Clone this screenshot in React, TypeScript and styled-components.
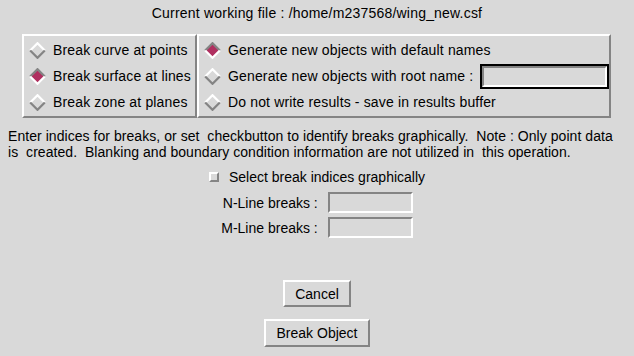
import React from 'react';
import styled, { createGlobalStyle } from 'styled-components';

const GlobalStyle = createGlobalStyle`
  html, body {
    margin: 0;
    padding: 0;
    background: #d9d9d9;
  }
  body {
    font-family: "Liberation Sans", Arial, sans-serif;
    color: #000;
  }
`;

const LIGHT = '#ffffff';
const DARK = '#848484';
const SELECT = '#b03060';

const Window = styled.div`
  width: 634px;
  height: 356px;
  display: flex;
  flex-direction: column;
  align-items: center;
  background: #d9d9d9;
  overflow: hidden;
`;

const Title = styled.div`
  height: 26px;
  line-height: 27px;
  font-size: 14px;
  letter-spacing: 0.2px;
  white-space: pre;
`;

const Frame = styled.div`
  margin-top: 8px;
  align-self: flex-start;
  margin-left: 22px;
  display: flex;
`;

const Panel = styled.div<{ $width: number }>`
  width: ${(p) => p.$width}px;
  box-sizing: border-box;
  padding: 1px 0;
  border: 2px solid;
  border-color: ${LIGHT} ${DARK} ${DARK} ${LIGHT};
  display: flex;
  flex-direction: column;
`;

const RadioRow = styled.div`
  height: 26px;
  display: flex;
  align-items: center;
  padding-left: 5px;
  gap: 7px;
  font-size: 14px;
  letter-spacing: 0.15px;
  white-space: pre;
`;

const RadioLabel = styled.span`
  flex: none;
`;

const FocusEntry = styled.div`
  margin-left: auto;
  width: 129px;
  height: 25px;
  box-sizing: border-box;
  border: 2px solid #000;
  background: #d9d9d9;
  &::after {
    content: '';
    display: block;
    height: 100%;
    box-sizing: border-box;
    border: 2px solid;
    border-color: ${DARK} ${LIGHT} ${LIGHT} ${DARK};
  }
`;

const Note = styled.div`
  align-self: flex-start;
  margin: 10px 0 0 8px;
  font-size: 14px;
  line-height: 16px;
  letter-spacing: 0.05px;
  white-space: pre;
`;

const CheckRow = styled.div`
  margin-top: 9px;
  height: 16px;
  display: flex;
  align-items: center;
  gap: 10px;
  font-size: 14px;
  white-space: pre;
`;

const CheckBox = styled.span`
  width: 10px;
  height: 10px;
  box-sizing: border-box;
  border: 2px solid;
  border-color: ${LIGHT} ${DARK} ${DARK} ${LIGHT};
  background: #d9d9d9;
`;

const FieldGrid = styled.div`
  margin-top: 7px;
  display: grid;
  grid-template-columns: auto 85px;
  column-gap: 10px;
  row-gap: 4px;
  align-items: center;
  font-size: 14px;
`;

const FieldLabel = styled.span`
  text-align: right;
  white-space: pre;
`;

const Entry = styled.div`
  width: 85px;
  height: 21px;
  box-sizing: border-box;
  border: 2px solid;
  border-color: ${DARK} ${LIGHT} ${LIGHT} ${DARK};
`;

const Button = styled.button<{ $first?: boolean }>`
  margin-top: ${(p) => (p.$first ? '42px' : '12px')};
  height: ${(p) => (p.$first ? '27px' : '28px')};
  width: ${(p) => (p.$first ? '68px' : '106px')};
  padding: 0;
  font-family: inherit;
  font-size: 14px;
  background: #d9d9d9;
  color: #000;
  border: 2px solid;
  border-color: ${LIGHT} ${DARK} ${DARK} ${LIGHT};
  border-radius: 0;
`;

const Diamond = ({ on }: { on?: boolean }) => (
  <svg width="17" height="17" viewBox="0 0 17 17" style={{ flex: 'none' }}>
    <polygon points="8.5,1 16,8.5 8.5,16 1,8.5" fill={on ? SELECT : '#d9d9d9'} />
    <polyline points="1.2,8.5 8.5,1.2 15.8,8.5" fill="none" stroke={on ? DARK : LIGHT} strokeWidth="2.2" />
    <polyline points="1.2,8.5 8.5,15.8 15.8,8.5" fill="none" stroke={on ? LIGHT : DARK} strokeWidth="2.2" />
  </svg>
);

const breakModes = [
  { label: 'Break curve at points', on: false },
  { label: 'Break surface at lines', on: true },
  { label: 'Break zone at planes', on: false },
];

export default function App() {
  return (
    <Window>
      <GlobalStyle />
      <Title>Current working file : /home/m237568/wing_new.csf</Title>

      <Frame>
        <Panel $width={175}>
          {breakModes.map((m) => (
            <RadioRow key={m.label}>
              <Diamond on={m.on} />
              <RadioLabel>{m.label}</RadioLabel>
            </RadioRow>
          ))}
        </Panel>
        <Panel $width={414}>
          <RadioRow>
            <Diamond on />
            <RadioLabel>Generate new objects with default names</RadioLabel>
          </RadioRow>
          <RadioRow>
            <Diamond />
            <RadioLabel>Generate new objects with root name :</RadioLabel>
            <FocusEntry />
          </RadioRow>
          <RadioRow>
            <Diamond />
            <RadioLabel>Do not write results - save in results buffer</RadioLabel>
          </RadioRow>
        </Panel>
      </Frame>

      <Note>
        {'Enter indices for breaks, or set  checkbutton to identify breaks graphically.  Note : Only point data\nis  created.  Blanking and boundary condition information are not utilized in  this operation.'}
      </Note>

      <CheckRow>
        <CheckBox />
        <span>Select break indices graphically</span>
      </CheckRow>

      <FieldGrid>
        <FieldLabel>N-Line breaks :</FieldLabel>
        <Entry />
        <FieldLabel>M-Line breaks :</FieldLabel>
        <Entry />
      </FieldGrid>

      <Button $first>Cancel</Button>
      <Button>Break Object</Button>
    </Window>
  );
}
